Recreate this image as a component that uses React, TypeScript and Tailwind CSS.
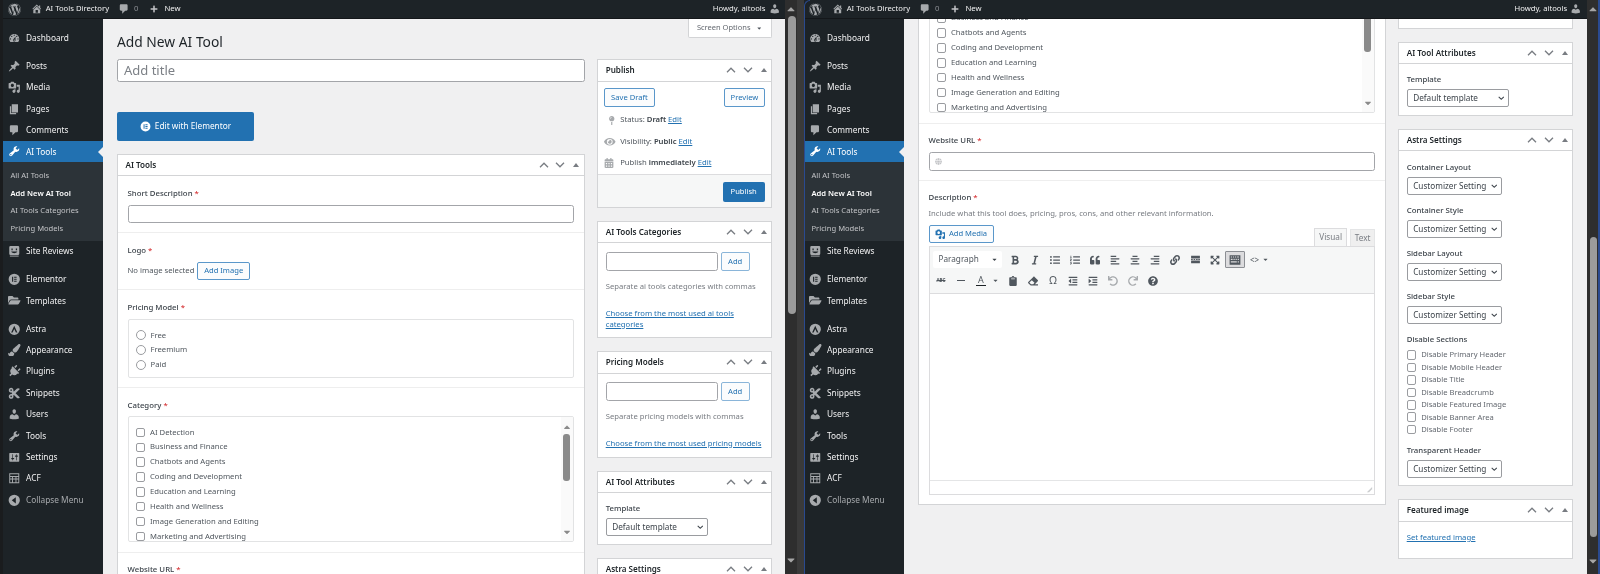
import React from "react";
import {
  FaWordpress, FaPlus, FaFolderOpen, FaPaintBrush, FaPlug, FaCut, FaEye, FaCalendarAlt, FaMapPin, FaGlobe,
  FaBold, FaItalic, FaListUl, FaListOl, FaQuoteLeft, FaAlignLeft, FaAlignCenter, FaAlignRight, FaLink, FaExpandArrowsAlt, FaClipboard, FaEraser, FaOutdent, FaIndent, FaUndo, FaRedo, FaQuestionCircle, FaChevronDown, FaCaretUp, FaCaretDown,
} from "react-icons/fa";

type IC = { className?: string };
const Dash = ({ d, className = "" }: IC & { d: string }) => (
  <svg viewBox="0 0 20 20" fill="currentColor" className={className}><path d={d} /></svg>
);
const Gauge = (p: IC) => <Dash {...p} d="M3.76 16h12.48c1.1-1.37 1.76-3.11 1.76-5 0-4.42-3.58-8-8-8s-8 3.58-8 8c0 1.89.66 3.63 1.76 5zM10 4c.55 0 1 .45 1 1s-.45 1-1 1-1-.45-1-1 .45-1 1-1zM6 6c.55 0 1 .45 1 1s-.45 1-1 1-1-.45-1-1 .45-1 1-1zm8 0c.55 0 1 .45 1 1s-.45 1-1 1-1-.45-1-1 .45-1 1-1zm-5.37 5.55L12 7v6c0 1.1-.9 2-2 2s-2-.9-2-2c0-.57.24-1.08.63-1.45zM4 10c.55 0 1 .45 1 1s-.45 1-1 1-1-.45-1-1 .45-1 1-1zm12 0c.55 0 1 .45 1 1s-.45 1-1 1-1-.45-1-1 .45-1 1-1zm-5 3c0-.55-.45-1-1-1s-1 .45-1 1 .45 1 1 1 1-.45 1-1z" />;
const Pin = (p: IC) => <Dash {...p} d="M10.44 3.02l1.82-1.82 6.36 6.35-1.83 1.82c-1.05-.68-2.48-.57-3.41.36l-.75.75c-.92.93-1.04 2.35-.35 3.41l-1.83 1.82-2.41-2.41-2.8 2.79c-.42.42-3.38 2.71-3.8 2.29s1.86-3.39 2.28-3.81l2.79-2.79L4.1 9.36l1.83-1.82c1.05.69 2.48.57 3.4-.36l.75-.75c.93-.92 1.05-2.35.36-3.41z" />;
const MediaI = (p: IC) => <Dash {...p} d="M13 11V4c0-.55-.45-1-1-1h-1.67L9 1H5L3.67 3H2c-.55 0-1 .45-1 1v7c0 .55.45 1 1 1h10c.55 0 1-.45 1-1zM7 4.5c1.38 0 2.5 1.12 2.5 2.5S8.38 9.5 7 9.5 4.5 8.38 4.5 7 5.62 4.5 7 4.5zM14 6h5v10.5c0 1.38-1.12 2.5-2.5 2.5S14 17.88 14 16.5s1.12-2.5 2.5-2.5c.17 0 .34.02.5.05V9h-3V6zm-4 8.05V13h2v3.5c0 1.38-1.12 2.5-2.5 2.5S7 17.88 7 16.5 8.12 14 9.5 14c.17 0 .34.02.5.05z" />;
const PageI = (p: IC) => <Dash {...p} d="M6 15V2h10v13H6zm-1 1h8v2H3V5h2v11z" />;
const CommentI = (p: IC) => <Dash {...p} d="M5 2h9c1.1 0 2 .9 2 2v7c0 1.1-.9 2-2 2h-2l-5 5v-5H5c-1.1 0-2-.9-2-2V4c0-1.1.9-2 2-2z" />;
const Wrench = (p: IC) => <Dash {...p} d="M16.68 9.77c-1.34 1.34-3.3 1.67-4.95.99l-5.41 6.52c-.99.99-2.59.99-3.58 0s-.99-2.59 0-3.57l6.52-5.42c-.68-1.65-.35-3.61.99-4.95 1.28-1.28 3.12-1.62 4.72-1.06l-2.89 2.89 2.82 2.82 2.86-2.87c.53 1.58.18 3.39-1.08 4.65zM3.81 16.21c.4.39 1.04.39 1.43 0 .4-.4.4-1.04 0-1.43-.39-.4-1.03-.4-1.43 0-.39.39-.39 1.03 0 1.43z" />;
const UsersI = (p: IC) => <Dash {...p} d="M10 9.25c-2.27 0-2.73-3.44-2.73-3.44C7 4.02 7.82 2 9.97 2c2.16 0 2.98 2.02 2.71 3.81 0 0-.41 3.44-2.68 3.44zm0 2.57L12.72 10c2.39 0 4.52 2.33 4.52 4.53v2.49s-3.65 1.13-7.24 1.13c-3.65 0-7.24-1.13-7.24-1.13v-2.49c0-2.25 1.94-4.48 4.47-4.48z" />;
const SettingsI = (p: IC) => <Dash {...p} d="M18 16V4c0-.55-.45-1-1-1H3c-.55 0-1 .45-1 1v12c0 .55.45 1 1 1h14c.55 0 1-.45 1-1zM8 11h1c.55 0 1 .45 1 1s-.45 1-1 1H8v1.5c0 .28-.22.5-.5.5s-.5-.22-.5-.5V13H6c-.55 0-1-.45-1-1s.45-1 1-1h1V5.5c0-.28.22-.5.5-.5s.5.22.5.5V11zm5-2h-1c-.55 0-1-.45-1-1s.45-1 1-1h1V5.5c0-.28.22-.5.5-.5s.5.22.5.5V7h1c.55 0 1 .45 1 1s-.45 1-1 1h-1v5.5c0 .28-.22.5-.5.5s-.5-.22-.5-.5V9z" />;
const HomeI = (p: IC) => <Dash {...p} d="M16 8.5l1.53 1.53-1.06 1.06L10 4.62l-6.47 6.47-1.06-1.06L10 2.5l4 4v-2h2v4zm-6-2.46l6 5.99V18H4v-5.97zM12 17v-5H8v5h4z" />;
const ReviewsI = (p: IC) => (
  <svg viewBox="0 0 20 20" className={p.className} fill="currentColor"><path fillRule="evenodd" d="M4 1.500h12a2 2 0 0 1 2 2v10.500a2 2 0 0 1-2 2H4a2 2 0 0 1-2-2V3.500a2 2 0 0 1 2-2zm1.500 4v3h2v-3h-2zm7 0v3h2v-3h-2zM5 10.500c1 2 3 2.500 5 2.500s4-.5 5-2.500H5z" /><rect x="3" y="17" width="14" height="1.500" /></svg>
);
const ElementorI = (p: IC) => (
  <svg viewBox="0 0 20 20" className={p.className} fill="currentColor"><path fillRule="evenodd" d="M10 1a9 9 0 1 1 0 18 9 9 0 0 1 0-18zM6.500 6v8h1.800V6H6.500zm3.300 0v1.700h4V6h-4zm0 3.150v1.700h4v-1.700h-4zm0 3.150V14h4v-1.700h-4z" /></svg>
);
const AstraI = (p: IC) => (
  <svg viewBox="0 0 20 20" className={p.className} fill="currentColor"><path fillRule="evenodd" d="M10 1a9 9 0 1 1 0 18 9 9 0 0 1 0-18zM10 4.500 5 15h2.400l2.600-5.600L12.600 15H15L10 4.500z" /></svg>
);
const AcfI = (p: IC) => (
  <svg viewBox="0 0 20 20" className={p.className} fill="currentColor"><path fillRule="evenodd" d="M2 2h16v16H2V2zm1.500 1.500v3h13v-3h-13zm0 4.500v2.500h3V8h-3zm4.500 0v2.500h4V8H8zm5.500 0v2.500h3V8h-3zM3.500 12v4.500h3V12h-3zm4.500 0v4.500h4V12H8zm5.500 0v4.500h3V12h-3z" /></svg>
);
const CollapseI = (p: IC) => (
  <svg viewBox="0 0 20 20" className={p.className} fill="currentColor"><path fillRule="evenodd" d="M10 1a9 9 0 1 1 0 18 9 9 0 0 1 0-18zm2.500 4L6 10l6.500 5V5z" /></svg>
);
const MoreI = (p: IC) => (
  <svg viewBox="0 0 20 20" className={p.className} fill="currentColor"><path d="M2 3h16v5H2zM2 9.200h3v1.600H2zM6.500 9.200h3v1.600h-3zM11 9.200h3v1.600h-3zM15 9.200h3v1.600h-3zM2 12h16v5H2z" /></svg>
);
const KitchenI = (p: IC) => (
  <svg viewBox="0 0 20 20" className={p.className} fill="currentColor"><path fillRule="evenodd" d="M1 2h18v16H1V2zm2 2v2h2V4H3zm3.500 0v2h2V4h-2zM10 4v2h2V4h-2zm3.500 0v2h3V4h-3zM3 8v2h3V8H3zm4.500 0v2h2V8h-2zM11 8v2h2V8h-2zm3.500 0v2h2V8h-2zM3 12v2h10v-2H3zm11.500 0v2h2v-2h-2z" /></svg>
);
const ResizeI = (p: IC) => (
  <svg viewBox="0 0 8 8" className={p.className} fill="currentColor"><path d="M7 1v6H1zM7 3.500 3.500 7H7z" opacity=".6" /></svg>
);
const PlugI = (p: IC) => <FaPlug className={`rotate-45 ${p.className}`} />;

const menu: { label: string; Icon: React.FC<IC>; gap?: boolean }[] = [
  { label: "Dashboard", Icon: Gauge },
  { label: "Posts", Icon: Pin, gap: true },
  { label: "Media", Icon: MediaI },
  { label: "Pages", Icon: PageI },
  { label: "Comments", Icon: CommentI },
];
const menu2: typeof menu = [
  { label: "Site Reviews", Icon: ReviewsI },
  { label: "Elementor", Icon: ElementorI, gap: true },
  { label: "Templates", Icon: FaFolderOpen as React.FC<IC> },
  { label: "Astra", Icon: AstraI, gap: true },
  { label: "Appearance", Icon: FaPaintBrush as React.FC<IC> },
  { label: "Plugins", Icon: PlugI },
  { label: "Snippets", Icon: FaCut as React.FC<IC> },
  { label: "Users", Icon: UsersI },
  { label: "Tools", Icon: Wrench },
  { label: "Settings", Icon: SettingsI },
  { label: "ACF", Icon: AcfI },
];

function MenuItem({ label, Icon, gap }: { label: string; Icon: React.FC<IC>; gap?: boolean }) {
  return (
    <div className={`flex h-[21.4px] items-center ${gap ? "mt-[6.7px]" : ""}`}>
      <span className="flex w-[23px] justify-center text-[#a7aaad]"><Icon className="size-[12.5px]" /></span>
      <span className="text-[8.3px] text-[#f0f0f1]">{label}</span>
    </div>
  );
}

function Sidebar() {
  return (
    <aside className="w-[100px] shrink-0 bg-[#1d2327] pt-[8.4px]">
      {menu.map((m) => <MenuItem key={m.label} {...m} />)}
      <div className="relative flex h-[21.4px] items-center bg-[#2271b1]">
        <span className="flex w-[23px] justify-center text-white"><Wrench className="size-[12.5px]" /></span>
        <span className="text-[8.3px] text-white">AI Tools</span>
        <svg viewBox="0 0 5 10" className="absolute right-0 top-[6px] h-[10px] w-[5px] text-[#f0f0f1]" fill="currentColor"><path d="M5 0v10L0 5z" /></svg>
      </div>
      <div className="flex flex-col bg-[#2c3338] pb-[3.4px] pt-[4.4px] text-[7.6px] text-[#c3c4c7]">
        <div className="flex h-[17.6px] items-center pl-[7.5px]">All AI Tools</div>
        <div className="flex h-[17.6px] items-center pl-[7.5px] font-semibold text-white">Add New AI Tool</div>
        <div className="flex h-[17.6px] items-center pl-[7.5px]">AI Tools Categories</div>
        <div className="flex h-[17.6px] items-center pl-[7.5px]">Pricing Models</div>
      </div>
      {menu2.map((m) => <MenuItem key={m.label} {...m} />)}
      <div className="flex h-[21.4px] items-center">
        <span className="flex w-[23px] justify-center text-[#a7aaad]"><CollapseI className="size-[12.5px]" /></span>
        <span className="text-[8.3px] text-[#a7aaad]">Collapse Menu</span>
      </div>
    </aside>
  );
}

function AdminBar() {
  return (
    <header className="flex h-[19px] shrink-0 items-center border-b border-[#14171a] bg-[#1d2327] pl-[4.5px] text-[7.7px] text-[#f0f0f1]">
      <FaWordpress className="size-[13px] text-[#a7aaad]" />
      <HomeI className="ml-[10px] size-[11.5px] text-[#a7aaad]" />
      <span className="ml-[3.7px]">AI Tools Directory</span>
      <CommentI className="ml-[9px] size-[12px] text-[#a7aaad]" />
      <span className="ml-[4px] text-[#8c8f94]">0</span>
      <FaPlus className="ml-[12px] size-[8px] text-[#c3c4c7]" />
      <span className="ml-[6px]">New</span>
      <span className="ml-auto">Howdy, aitools</span>
      <UsersI className="ml-[3px] mr-[5px] size-[11.5px] text-[#a7aaad]" />
    </header>
  );
}

function MoveIcons() {
  return (
    <span className="flex items-center text-[#787c82]">
      <svg viewBox="0 0 10 6" className="h-[6px] w-[10px]" fill="none" stroke="currentColor" strokeWidth="1.3"><path d="M1 5.200 5 1.200l4 4" /></svg>
      <svg viewBox="0 0 10 6" className="ml-[6.500px] h-[6px] w-[10px]" fill="none" stroke="currentColor" strokeWidth="1.3"><path d="M1 .8l4 4 4-4" /></svg>
      <svg viewBox="0 0 6 4" className="ml-[8px] h-[4px] w-[6px]" fill="currentColor"><path d="M3 0l3 4H0z" /></svg>
    </span>
  );
}

function Box({ title, children, className = "" }: { title: string; children: React.ReactNode; className?: string }) {
  return (
    <section className={`border border-[#d3d4d6] bg-white ${className}`}>
      <div className="flex h-[21.5px] items-center justify-between border-b border-[#d3d4d6] pl-[7.5px] pr-[4.5px]">
        <h2 className="text-[8.1px] font-semibold text-[#1d2327]">{title}</h2>
        <MoveIcons />
      </div>
      {children}
    </section>
  );
}

const Label = ({ children, req }: { children: React.ReactNode; req?: boolean }) => (
  <div className="h-[10px] text-[7.8px] font-medium leading-[10px] text-[#3c434a]">
    {children}
    {req && <span className="text-[#d63638]"> *</span>}
  </div>
);
const Input = ({ className = "", children }: { className?: string; children?: React.ReactNode }) => (
  <div className={`flex items-center rounded-[2.5px] border border-[#a3a5a9] bg-white ${className}`}>{children}</div>
);
const Btn = ({ children, className = "" }: { children: React.ReactNode; className?: string }) => (
  <div className={`flex items-center justify-center rounded-[2px] border border-[#5a97ca] bg-[#fbfcfd] text-[7.6px] text-[#2271b1] ${className}`}>{children}</div>
);
const Link = ({ children }: { children: React.ReactNode }) => <span className="text-[7.7px] text-[#2271b1] underline">{children}</span>;
const Check = () => <span className="block size-[9.5px] shrink-0 rounded-[2px] border border-[#9a9ca0] bg-white" />;
const Radio = () => <span className="block size-[10px] shrink-0 rounded-full border border-[#9a9ca0] bg-white" />;
const Select = ({ children, className = "" }: { children: React.ReactNode; className?: string }) => (
  <div className={`flex h-[18.5px] items-center justify-between rounded-[2px] border border-[#9a9ca0] bg-white pl-[5.5px] pr-[3.5px] text-[8.2px] text-[#3c434a] ${className}`}>
    {children}
    <FaChevronDown className="size-[6.5px] text-[#3c434a]" />
  </div>
);

const cats = ["AI Detection", "Business and Finance", "Chatbots and Agents", "Coding and Development", "Education and Learning", "Health and Wellness", "Image Generation and Editing", "Marketing and Advertising", "Productivity"];

function TBtn({ children, className = "" }: { children: React.ReactNode; className?: string }) {
  return <span className={`flex h-[17px] w-[20px] items-center justify-center text-[#50575e] ${className}`}>{children}</span>;
}

function Editor() {
  const s = "size-[10px]";
  return (
    <div className="flex h-[249px] flex-col border border-[#dcdcde] bg-white">
      <div className="flex flex-col gap-[4px] border-b border-[#dcdcde] bg-[#f6f7f7] pb-[3.5px] pt-[4px]">
        <div className="flex items-center pl-[3px]">
          <div className="flex h-[17px] w-[69.5px] items-center justify-between rounded-[2px] bg-white pl-[6px] pr-[4px] text-[8.2px] text-[#50575e]">
            Paragraph <FaCaretDown className="size-[7px] text-[#3c434a]" />
          </div>
          <span className="ml-[3px] flex items-center">
            <TBtn><FaBold className={s} /></TBtn>
            <TBtn><FaItalic className={s} /></TBtn>
            <TBtn><FaListUl className={s} /></TBtn>
            <TBtn><FaListOl className={s} /></TBtn>
            <TBtn><FaQuoteLeft className={s} /></TBtn>
            <TBtn><FaAlignLeft className={s} /></TBtn>
            <TBtn><FaAlignCenter className={s} /></TBtn>
            <TBtn><FaAlignRight className={s} /></TBtn>
            <TBtn><FaLink className={s} /></TBtn>
            <TBtn><MoreI className="size-[11px]" /></TBtn>
            <TBtn><FaExpandArrowsAlt className={s} /></TBtn>
            <TBtn className="rounded-[1px] border border-[#8c8f94] bg-[#dcdcde]"><KitchenI className="size-[12px]" /></TBtn>
            <span className="flex w-[30px] items-center justify-start gap-[3px] pl-[5px] text-[#50575e]">
              <span className="text-[8px] leading-none">&lt;&gt;</span>
              <FaCaretDown className="size-[7px]" />
            </span>
          </span>
        </div>
        <div className="flex items-center pl-[1.5px]">
          <TBtn><span className="text-[4.5px] font-bold line-through">ABC</span></TBtn>
          <TBtn><span className="block h-[1.5px] w-[7.5px] bg-[#50575e]" /></TBtn>
          <TBtn><span className="border-b-[1.5px] border-[#1d2327] px-[2px] text-[9px] leading-[10px]">A</span></TBtn>
          <span className="flex w-[9px] justify-center text-[#50575e]"><FaCaretDown className="size-[7px]" /></span>
          <span className="ml-[3px] flex items-center">
            <TBtn><FaClipboard className={s} /></TBtn>
            <TBtn><FaEraser className={s} /></TBtn>
            <TBtn><span className="text-[10.5px] leading-none">Ω</span></TBtn>
            <TBtn><FaOutdent className={s} /></TBtn>
            <TBtn><FaIndent className={s} /></TBtn>
            <TBtn className="text-[#a7aaad]"><FaUndo className={s} /></TBtn>
            <TBtn className="text-[#a7aaad]"><FaRedo className={s} /></TBtn>
            <TBtn><FaQuestionCircle className={s} /></TBtn>
          </span>
        </div>
      </div>
      <div className="flex-1" />
      <div className="flex h-[14px] items-end justify-end border-t border-[#e4e5e6] pb-[1px] pr-[1px] text-[#a7aaad]">
        <ResizeI className="size-[7px]" />
      </div>
    </div>
  );
}

function LeftColumn() {
  return (
    <div className="ml-[14px] w-[467.7px] shrink-0 pt-[14.5px]">
      <h1 className="h-[16px] text-[13.8px] leading-[16px] text-[#1d2327]">Add New AI Tool</h1>
      <Input className="mt-[9.5px] h-[22.5px] pl-[6px] text-[13px] text-[#7c8086]">Add title</Input>
      <div className="mt-[30.5px] flex h-[28.5px] w-[137px] items-center justify-center gap-[4px] rounded-[2px] bg-[#2271b1] text-[8.3px] text-white">
        <ElementorI className="size-[11px]" />
        Edit with Elementor
      </div>
      <div className="mt-[13px] border border-[#d3d4d6] bg-white">
        <div className="flex h-[21.5px] items-center justify-between border-b border-[#d3d4d6] pl-[7.5px] pr-[4.5px]">
          <h2 className="text-[8.1px] font-semibold text-[#1d2327]">AI Tools</h2>
          <MoveIcons />
        </div>
        <div className="h-[57px] border-b border-[#eeeeee] px-[9.5px] pt-[12px]">
          <Label req>Short Description</Label>
          <Input className="mt-[6.5px] h-[18.5px]" />
        </div>
        <div className="h-[57px] border-b border-[#eeeeee] px-[9.5px] pt-[12px]">
          <Label req>Logo</Label>
          <div className="mt-[6.5px] flex items-center gap-[3px] text-[7.7px] text-[#50575e]">
            No image selected
            <Btn className="h-[18.5px] w-[52.5px]">Add Image</Btn>
          </div>
        </div>
        <div className="h-[98px] border-b border-[#eeeeee] px-[9.5px] pt-[12px]">
          <Label req>Pricing Model</Label>
          <div className="mt-[7px] h-[59px] rounded-[2px] border border-[#e2e3e4] pl-[7px] pt-[8px]">
            {["Free", "Freemium", "Paid"].map((t) => (
              <div key={t} className="flex h-[14.75px] items-center gap-[5px] text-[7.7px] text-[#50575e]"><Radio />{t}</div>
            ))}
          </div>
        </div>
        <div className="h-[165px] border-b border-[#eeeeee] px-[9.5px] pt-[12px]">
          <Label req>Category</Label>
          <div className="mt-[6px] flex h-[126px] overflow-hidden rounded-[2px] border border-[#e2e3e4]">
            <div className="flex-1 pl-[7px] pt-[8px]">
              {cats.map((t) => (
                <div key={t} className="flex h-[14.85px] items-center gap-[5px] text-[7.7px] text-[#50575e]"><Check />{t}</div>
              ))}
            </div>
            <div className="flex w-[12.5px] flex-col items-center bg-[#fafafa] pt-[5px] text-[#8a8a8a]">
              <FaCaretUp className="size-[10px]" />
              <span className="mt-[1.5px] h-[47px] w-[7px] rounded-[3px] bg-[#8a8a8a]" />
              <FaCaretDown className="mt-[46px] size-[10px]" />
            </div>
          </div>
        </div>
        <div className="h-[57px] border-b border-[#eeeeee] px-[9.5px] pt-[11px]">
          <Label req>Website URL</Label>
          <Input className="mt-[6.5px] h-[19px] pl-[5px]"><FaGlobe className="size-[7px] text-[#c3c4c7]" /></Input>
        </div>
        <div className="h-[323px] px-[9.5px] pt-[10.5px]">
          <Label req>Description</Label>
          <div className="mt-[6px] h-[10px] text-[7.7px] leading-[10px] text-[#787c82]">Include what this tool does, pricing, pros, cons, and other relevant information.</div>
          <div className="mt-[7px] flex h-[21.5px] items-start justify-between">
            <Btn className="h-[18.5px] w-[65.5px] gap-[3px]"><MediaI className="size-[10.5px]" />Add Media</Btn>
            <div className="relative z-10 flex items-end self-end text-[8.2px] text-[#787c82]">
              <span className="flex h-[18px] w-[33px] items-center justify-center border border-b-0 border-[#dcdcde] bg-[#f6f7f7]">Visual</span>
              <span className="ml-[3px] flex h-[17px] w-[25px] items-center justify-center border border-b-0 border-[#e4e5e6] bg-[#efefef]">Text</span>
            </div>
          </div>
          <Editor />
        </div>
      </div>
    </div>
  );
}

function RightColumn() {
  const sel = "mt-[5px] w-[95.5px]";
  return (
    <div className="ml-[12.5px] w-[175px] shrink-0 text-[7.7px] text-[#50575e]">
      <div className="flex justify-end">
        <div className="flex h-[18.5px] w-[84.5px] items-center justify-center gap-[6px] rounded-b-[2px] border border-t-0 border-[#d3d4d6] bg-white text-[7.5px] text-[#646970]">
          Screen Options <FaCaretDown className="size-[6.5px] text-[#50575e]" />
        </div>
      </div>
      <Box title="Publish" className="mt-[21.5px]">
        <div className="flex justify-between px-[6px] pt-[6.5px]">
          <Btn className="h-[19px] w-[50.5px]">Save Draft</Btn>
          <Btn className="h-[19px] w-[41.5px]">Preview</Btn>
        </div>
        <div className="mt-[2.5px] flex h-[21.5px] items-center px-[6px]">
          <span className="flex w-[16px] pl-[3px] text-[#a7aaad]"><FaMapPin className="size-[9.5px]" /></span>
          <span>Status: <b className="font-semibold text-[#3c434a]">Draft</b> <Link>Edit</Link></span>
        </div>
        <div className="flex h-[21.5px] items-center px-[6px]">
          <span className="flex w-[16px] text-[#a7aaad]"><FaEye className="size-[11.5px]" /></span>
          <span>Visibility: <b className="font-semibold text-[#3c434a]">Public</b> <Link>Edit</Link></span>
        </div>
        <div className="flex h-[21.5px] items-center px-[6px]">
          <span className="flex w-[16px] text-[#a7aaad]"><FaCalendarAlt className="size-[10px]" /></span>
          <span>Publish <b className="font-semibold text-[#3c434a]">immediately</b> <Link>Edit</Link></span>
        </div>
        <div className="flex h-[33px] items-start justify-end border-t border-[#dcdcde] bg-[#f6f7f7] pr-[6.5px] pt-[7px]">
          <div className="flex h-[20px] w-[42px] items-center justify-center rounded-[2px] bg-[#2271b1] text-[7.6px] text-white">Publish</div>
        </div>
      </Box>
      <Box title="AI Tools Categories" className="mt-[12.5px]">
        <div className="px-[7.5px] pt-[9px]">
          <div className="flex gap-[3px]">
            <Input className="h-[19px] w-[112px]" />
            <Btn className="h-[19px] w-[29px] border-[#8ab5d9]">Add</Btn>
          </div>
          <p className="mt-[9.5px] h-[10px] leading-[10px] text-[#787c82]">Separate ai tools categories with commas</p>
          <p className="mt-[17.5px] pb-[8px] leading-[10.5px]"><Link>Choose from the most used ai tools categories</Link></p>
        </div>
      </Box>
      <Box title="Pricing Models" className="mt-[13px]">
        <div className="px-[7.5px] pt-[8.5px]">
          <div className="flex gap-[3px]">
            <Input className="h-[19px] w-[112px]" />
            <Btn className="h-[19px] w-[29px] border-[#8ab5d9]">Add</Btn>
          </div>
          <p className="mt-[9.5px] h-[10px] leading-[10px] text-[#787c82]">Separate pricing models with commas</p>
          <p className="mt-[17.5px] pb-[8.5px] leading-[10.5px]"><Link>Choose from the most used pricing models</Link></p>
        </div>
      </Box>
      <Box title="AI Tool Attributes" className="mt-[12.5px]">
        <div className="px-[7.5px] pb-[7.5px] pt-[10px]">
          <Label>Template</Label>
          <Select className="mt-[4.5px] w-[102.5px]">Default template</Select>
        </div>
      </Box>
      <Box title="Astra Settings" className="mt-[13px]">
        <div className="px-[7.5px] pb-[7px] pt-[10.5px]">
          <Label>Container Layout</Label>
          <Select className={sel}>Customizer Setting</Select>
          <div className="mt-[9.5px]"><Label>Container Style</Label></div>
          <Select className={sel}>Customizer Setting</Select>
          <div className="mt-[9.5px]"><Label>Sidebar Layout</Label></div>
          <Select className={sel}>Customizer Setting</Select>
          <div className="mt-[9.5px]"><Label>Sidebar Style</Label></div>
          <Select className={sel}>Customizer Setting</Select>
          <div className="mt-[9.5px]"><Label>Disable Sections</Label></div>
          <div className="mt-[5.3px]">
            {["Disable Primary Header", "Disable Mobile Header", "Disable Title", "Disable Breadcrumb", "Disable Featured Image", "Disable Banner Area", "Disable Footer"].map((t) => (
              <div key={t} className="flex h-[12.45px] items-center gap-[5px] text-[7.6px] text-[#646970]"><Check />{t}</div>
            ))}
          </div>
          <div className="mt-[8.7px]"><Label>Transparent Header</Label></div>
          <Select className={sel}>Customizer Setting</Select>
        </div>
      </Box>
      <Box title="Featured image" className="mt-[13px]">
        <div className="px-[7.5px] pb-[15px] pt-[10.5px] leading-[10.5px]"><Link>Set featured image</Link></div>
      </Box>
    </div>
  );
}

function Scrollbar({ thumb, down }: { thumb: string; down: string }) {
  return (
    <div className="flex h-full flex-col bg-[#2e2e2e] text-[#a6a6a6]">
      <FaCaretUp className="mx-auto mt-[3px] size-[12px]" />
      <span className={`ml-[3px] w-[7.5px] rounded-[4px] bg-[#9b9b9b] ${thumb}`} />
      <FaCaretDown className={`mx-auto size-[12px] ${down}`} />
    </div>
  );
}

function Wp({ scrolled }: { scrolled?: boolean }) {
  return (
    <div className="flex h-full min-w-0 flex-1 flex-col">
      <AdminBar />
      <div className="flex min-h-0 flex-1">
        <Sidebar />
        <main className="min-w-0 flex-1 overflow-hidden bg-[#f0f0f1]">
          <div className={`flex ${scrolled ? "-mt-[429px]" : ""}`}>
            <LeftColumn />
            <RightColumn />
          </div>
        </main>
      </div>
    </div>
  );
}

export default function App() {
  return (
    <div className="flex h-[574px] w-[1600px] overflow-hidden bg-[#2e2e2e] font-['Noto_Sans','Open_Sans',sans-serif] blur-[0.3px]">
      <div className="flex h-full w-[803.5px] shrink-0">
        <span className="h-full w-[3px] shrink-0 bg-[#1a1c1e]" />
        <Wp />
        <div className="h-full w-[12px] shrink-0">
          <Scrollbar thumb="mt-[1px] h-[298px]" down="mt-[240px]" />
        </div>
        <span className="h-full w-[6.5px] shrink-0 bg-[#3a3a3a]" />
      </div>
      <div className="relative flex h-full min-w-0 flex-1 pl-[0.5px]">
        <Wp scrolled />
        <div className="h-full w-[11.3px] shrink-0">
          <Scrollbar thumb="mt-[222px] h-[300px]" down="mt-[18px]" />
        </div>
        <span className="h-full w-[2px] shrink-0 bg-[#2a4a90]" />
        <span className="absolute inset-y-0 left-0 w-[6px] rounded-tl-[6px] border-l-[1.5px] border-t border-[#2a4a90]" />
      </div>
    </div>
  );
}
